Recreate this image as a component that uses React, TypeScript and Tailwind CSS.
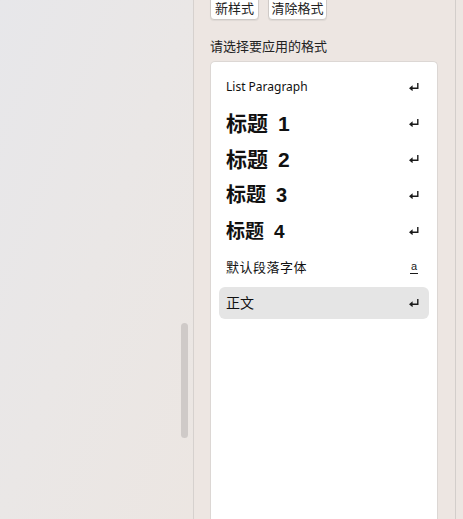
const cjk = "font-['Noto_Sans','Noto_Sans_CJK_SC',sans-serif]";

const ReturnMark = () => (
  <svg width="10" height="8" viewBox="0 0 10 8" className="text-[#1a1a1a]">
    <path d="M8.8 0 V5.2 H2.5" fill="none" stroke="currentColor" strokeWidth="1.4" />
    <path d="M0 5.2 L3.6 2.2 V8.2 Z" fill="currentColor" />
  </svg>
);

const CharMark = () => (
  <span className="mr-[1px] flex flex-col items-center leading-none text-[#1a1a1a]">
    <span className="text-[11px] font-['Liberation_Sans',sans-serif]">a</span>
    <span className="mt-[1px] h-px w-[8px] bg-[#1a1a1a]" />
  </span>
);

type Style = { name: string; cls: string; h: string; num?: string; mark: "ret" | "char"; active?: boolean };

const styles: Style[] = [
  { name: "List Paragraph", cls: "text-[12px] font-['Noto_Sans',sans-serif] text-[#111]", h: "h-[36px]", mark: "ret" },
  { name: "标题", num: "1", cls: "text-[21px] font-bold", h: "h-[36px]", mark: "ret" },
  { name: "标题", num: "2", cls: "text-[21px] font-bold", h: "h-[36px]", mark: "ret" },
  { name: "标题", num: "3", cls: "text-[20px] font-bold", h: "h-[36px]", mark: "ret" },
  { name: "标题", num: "4", cls: "text-[19px] font-bold", h: "h-[36px]", mark: "ret" },
  { name: "默认段落字体", cls: "text-[13px] tracking-[0.5px]", h: "h-[36px]", mark: "char" },
  { name: "正文", cls: "text-[14px]", h: "h-[32px]", mark: "ret", active: true },
];

export default function App() {
  return (
    <div className={`flex h-[519px] w-[463px] overflow-hidden bg-[#ede6e2] ${cjk}`}>
      {/* left document area */}
      <div className="flex h-full w-[193px] shrink-0 justify-end bg-gradient-to-br from-[#e7e7ea] via-[#eae7e6] to-[#ece6e2] pr-[5px] pt-[323px]">
        <div className="h-[115px] w-[7px] rounded-full bg-[#cfcac8]" />
      </div>
      <div className="w-px shrink-0 bg-[#d6d1ce]" />

      {/* styles pane */}
      <div className="flex w-[261px] shrink-0 flex-col pl-[16px] pr-[17px]">
        <div className="-mt-[5px] flex gap-[9px]">
          <button className="h-[25px] w-[49px] rounded-[4px] border border-[#cfcac7] bg-white pt-[3px] text-[13px] text-[#222] shadow-[0_1px_1px_rgba(0,0,0,0.06)]">
            新样式
          </button>
          <button className="h-[25px] w-[59px] rounded-[4px] border border-[#cfcac7] bg-white pt-[3px] text-[13px] text-[#222] shadow-[0_1px_1px_rgba(0,0,0,0.06)]">
            清除格式
          </button>
        </div>
        <div className="mt-[17px] text-[13px] leading-[18px] text-[#222]">请选择要应用的格式</div>
        <div className="mt-[6px] flex-1 rounded-t-[5px] border border-b-0 border-[#dcd7d4] bg-white px-[8px] pt-[7px]">
          {styles.map((s, i) => (
            <div
              key={i}
              className={`flex ${s.h} items-center justify-between rounded-[6px] pl-[7px] pr-[10px] ${s.active ? "mt-[2px] bg-[#e5e5e5]" : ""}`}
            >
              <span className={`${s.cls} leading-none text-[#111]`}>
                {s.name}
                {s.num && <span className="ml-[10px] font-['Liberation_Sans',sans-serif]">{s.num}</span>}
              </span>
              {s.mark === "ret" ? <ReturnMark /> : <CharMark />}
            </div>
          ))}
        </div>
      </div>

      <div className="w-px shrink-0 bg-[#d3cecb]" />
      <div className="flex-1 bg-[#ede6e2]" />
    </div>
  );
}
